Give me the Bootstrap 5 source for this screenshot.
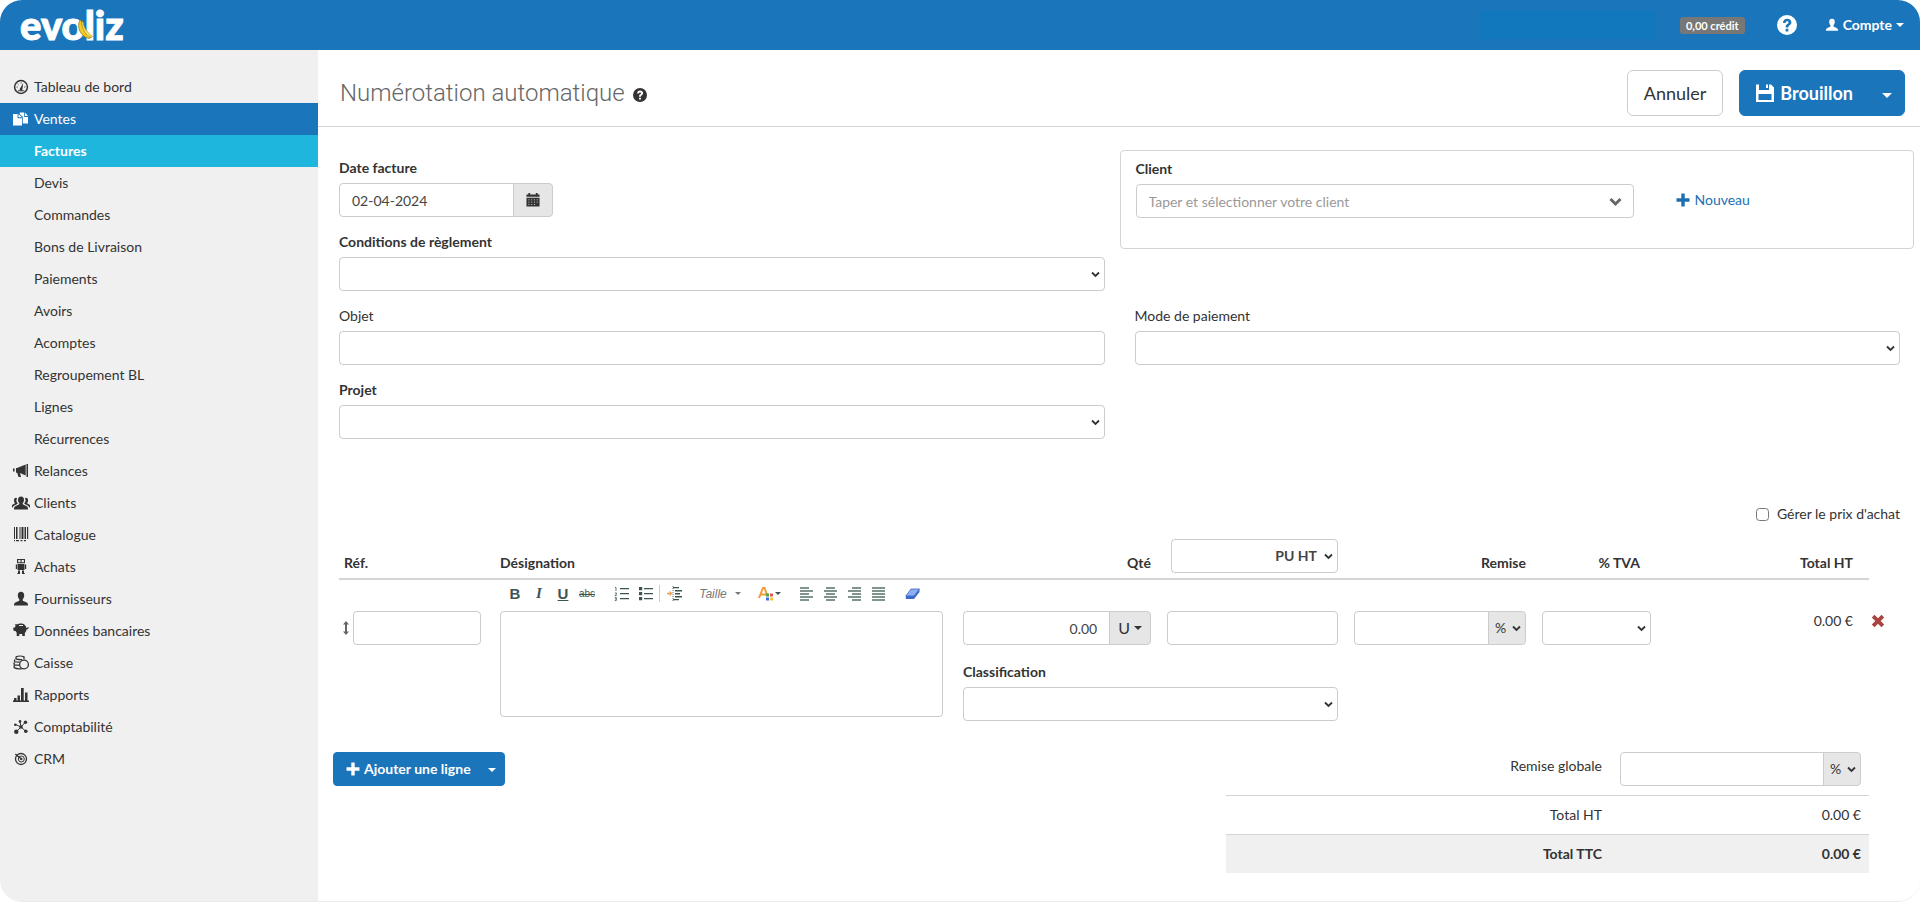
<!DOCTYPE html>
<html lang="fr">
<head>
<meta charset="utf-8">
<meta name="viewport" content="width=device-width, initial-scale=1">
<title>Evoliz - Facture</title>
<link href="https://cdn.jsdelivr.net/npm/bootstrap@5.3.0/dist/css/bootstrap.min.css" rel="stylesheet">
<style>
  :root { --brand: #1b75bb; --line: #d4d4d4; }
  body { font-family: Lato, "Liberation Sans", sans-serif; font-size: 14px; line-height: 20px; color: #333; background: #fff; }
  .app { min-height: 100vh; border-radius: 22px; overflow: hidden; border-bottom: 1px solid #ebebeb; }
  .ico { width: 14px; height: 14px; fill: currentColor; flex: none; }
  .ico-lg { width: 20px; height: 20px; }
  .ico-md { width: 18px; height: 18px; }

  .topbar { height: 50px; background: var(--brand); color: #fff; padding: 0 16px 0 20px; }
  .logo { font-size: 40px; font-weight: 900; line-height: 50px; color: #fff; text-decoration: none; position: relative; -webkit-text-stroke: 1px #fff; }
  .logo svg { position: absolute; left: 56px; top: 20px; width: 18px; height: 20px; }
  .account-name { width: 176px; height: 28px; background: #1278bd; }
  .credit { background: #777; font-size: 11px; font-weight: 700; line-height: 17px; padding: 0 6px; border-radius: 3px; }
  .topbar a { color: #fff; text-decoration: none; }
  .caret { display: inline-block; border: 4px solid transparent; border-top-color: currentColor; border-bottom: 0; vertical-align: middle; }

  .side { width: 318px; background: #f0f0f0; padding-top: 21px; }
  .side a { display: flex; align-items: center; gap: 6px; height: 32px; padding-left: 14px; color: #333; text-decoration: none; }
  .side .ico { width: 18px; height: 16px; margin: 0 -2px; overflow: visible; }
  .side .sub { padding-left: 34px; }
  .side .open { background: var(--brand); color: #fff; }
  .side .current { background: #1fb6dd; color: #fff; font-weight: 700; }

  .titlebar { padding: 20px 15px 10px 22px; border-bottom: 1px solid var(--line); }
  .titlebar h1 { font: 300 24px/46px Roboto, sans-serif; color: #666; margin: 0; }
  .btn { --bs-btn-font-size: 14px; --bs-btn-line-height: 20px; --bs-btn-border-radius: 4px; }
  .btn-brand { --bs-btn-bg: var(--brand); --bs-btn-border-color: var(--brand); --bs-btn-color: #fff; --bs-btn-hover-bg: #16629d; --bs-btn-hover-color: #fff; font-weight: 700; }
  .big { --bs-btn-font-size: 18px; --bs-btn-line-height: 24px; --bs-btn-padding-y: 10px; --bs-btn-padding-x: 16px; --bs-btn-border-radius: 6px; }
  .big .caret { border-width: 5px; border-bottom: 0; }
  .big.toggle { --bs-btn-padding-x: 12px; }
  .save { gap: 6px; }
  .btn-plain { --bs-btn-border-color: #ccc; --bs-btn-bg: #fff; --bs-btn-color: #333; }

  .work { padding: 23px 20px 28px 21px; }
  .cols { --bs-gutter-x: 30px; }
  .field { margin-bottom: 15px; }
  .field label { display: block; margin-bottom: 5px; }
  .client-box { border: 1px solid var(--line); border-radius: 4px; margin: 0 -14px 57px -15px; padding: 8px 14px 30px 15px; }
  .form-control, .form-select { height: 34px; border: 1px solid #ccc; border-radius: 4px; font-size: 14px; line-height: 20px; padding: 6px 12px; color: #444; background-color: #fff; }
  .form-control::placeholder { color: #999; }
  textarea.form-control { height: 106px; resize: none; }
  .form-select { padding-right: 20px; background-position: right 4px center; background-size: 9px 9px;
    background-image: url("data:image/svg+xml,%3Csvg xmlns='http://www.w3.org/2000/svg' viewBox='0 0 9 9'%3E%3Cpath d='M1 2.5 4.5 6 8 2.5' fill='none' stroke='%23333' stroke-width='1.8'/%3E%3C/svg%3E"); }
  .client-input { background: no-repeat right 11px center / 13px 13px
    url("data:image/svg+xml,%3Csvg xmlns='http://www.w3.org/2000/svg' viewBox='0 0 13 13'%3E%3Cpath d='M1.5 4 6.5 9 11.5 4' fill='none' stroke='%23666' stroke-width='3'/%3E%3C/svg%3E"); }
  .date-group { width: 214px; }
  .addon { background-color: #e6e6e6; border: 1px solid #ccc; color: #333; padding: 0; justify-content: center; border-radius: 4px; }
  select.addon.form-select { flex: 0 0 38px; width: 38px; padding: 6px 0 6px 6px; }
  .link-brand { color: #1b6fb3; text-decoration: none; margin-left: 12px; }
  .option-row { padding-top: 50px; }

  .lines { table-layout: fixed; width: 100%; margin-top: 15px; }
  .lines th, .lines td { padding: 0 8px; vertical-align: top; }
  .lines thead th { vertical-align: bottom; padding-bottom: 5px; border-bottom: 2px solid var(--line); }
  .lines thead th:first-child { padding-left: 5px; }
  .lines thead th:last-child { border-bottom: 0; }
  .lines thead th.tva { padding-right: 19px; }
  .c-ref { width: 153px; } .c-qty { width: 204px; } .c-pu { width: 187px; } .c-rem { width: 188px; }
  .c-tva { width: 125px; } .c-tot { width: 210px; } .c-del { width: 31px; }
  .lines .entry > td { padding-top: 31px; height: 83px; }
  .lines .entry > td.desc { padding: 0 12px 0 8px; }
  .lines .entry > td.ref { padding: 31px 11px 0 3px; }
  .lines .entry > td.del { padding-left: 2px; }
  .grip { width: 8px; height: 16px; color: #666; }
  .ref .form-control { margin-left: 3px; }
  .editbar { height: 31px; padding: 0 0 4px 3px; color: #3d5552; }
  .editbar button { width: 24px; height: 22px; padding: 0; border: 0; background: none; color: inherit; display: flex; align-items: center; justify-content: center; gap: 4px; }
  .editbar .ico { width: 15px; height: 15px; }
  .editbar .caret { border-width: 3px; border-bottom: 0; }
  .editbar .wide { width: 48px; gap: 8px; font: italic 12px "Liberation Sans", sans-serif; color: #777; }
  .editbar .tint { width: 30px; gap: 2px; }
  .editbar .lead-gap { margin-left: 10px; }
  .editbar .soft { color: #80948f; }
  .editbar .sep { width: 1px; height: 17px; background: #ccc; margin: 0 2px; }
  .editbar .face { font: bold 15px "Liberation Sans", sans-serif; }
  .editbar .serif { font-family: "Liberation Serif", serif; font-style: italic; }
  .editbar .slim { font: 10px "Liberation Sans", sans-serif; }

  .add-line { margin-left: -6px; }
  .totals { width: 643px; margin-right: 31px; }
  .totals th, .totals td { padding: 9px 8px; text-align: right; border-top: 1px solid var(--line); font-weight: 400; }
  .totals td { width: 259px; }
  .totals tr:first-child > * { border-top: 0; padding: 0 8px 9px 10px; vertical-align: top; }
  .totals tr:first-child th { padding-top: 4px; }
  .totals .grand > * { background: #f0f0f0; font-weight: 700; }
  .form-check-input { width: 13px; height: 13px; margin: 0; border-color: #777; border-radius: 3px; }
</style>
</head>
<body>
<svg width="0" height="0" class="d-none">
  <symbol id="i-dash" viewBox="0 0 16 16"><circle cx="8" cy="8" r="6.4" fill="none" stroke="currentColor" stroke-width="1.5"/><path d="M7 9.500 10.200 4 9.400 10.200a1.400 1.400 0 1 1-2.400-.7z"/><path d="M3.600 8h1.200M4.600 4.800l.9.900M8 3.300v1.200M11.200 8h1.200M4.800 11.800h6.400" fill="none" stroke="currentColor" stroke-width=".9"/></symbol>
  <symbol id="i-docs" viewBox="0 0 16 16"><path d="M0 3h4.600v4.200H9V14.500H0zM5.500 3 9 6.300H5.500z"/><path d="M6.800 1.500h4.400v4.400H15v6.600h-5.200V5.800L6.800 3z"/><path d="M12 1.500 15 5h-3z"/></symbol>
  <symbol id="i-horn" viewBox="0 0 16 16"><path d="M13.500 1H15v13h-1.500zM4 5l8.700-3.500v11L7 10l1 4H5.500L4.200 9.800H3V5zM0 5.500h1.600v3H0z"/></symbol>
  <symbol id="i-group" viewBox="1 1 18 14"><path d="M10 1.500c2 0 3 1.400 3 3.200 0 1.400-.5 2.600-1.300 3.300v1.300l4 2c1 .5 1.300 1.200 1.300 3.200H3c0-2 .3-2.700 1.300-3.200l4-2V8C7.500 7.300 7 6.100 7 4.700c0-1.800 1-3.200 3-3.200z"/><path d="M6 3.500a4 4 0 0 0 .7 4.700v.6L3 10.800c-.7.400-1 .9-1.300 1.700H0c0-1.700.3-2 1-2.400l2.700-1.500v-.9C2.400 6.300 2.700 2.700 5 2.700c.5 0 .8.300 1 .8zM14 3.500a4 4 0 0 1-.7 4.700v.6l3.700 2c.7.400 1 .9 1.300 1.700H20c0-1.700-.3-2-1-2.400l-2.700-1.500v-.9c1.300-1.400 1-5-1.300-5-.5 0-.8.300-1 .8z"/></symbol>
  <symbol id="i-code" viewBox="0 0 16 16"><path d="M1 0h1v12H1zM3 0h1.500v12H3zM6.500 0h1v12h-1zM8.500 0h2v12h-2zM11.500 0H13v12h-1.500zM14 0h1.200v12H14zM1 13h1v1.200H1zM3 13h3v1.200H3zM7.500 13h2v1.200h-2zM11 13h2v1.200h-2z"/></symbol>
  <symbol id="i-robot" viewBox="0 0 16 16"><path fill-rule="evenodd" d="M4 0h8v4.300H4zM5.200 1v2.200h2.300V1zM8.600 1v2.200h2.300V1z"/><path d="M4.500 5h7v6h-7zM2.800 5.500H4V10H2.800zM12 5.500h1.200V10H12zM5 11.500h2V15H4.300v-1H5zM9 11.500h2V14h.7v1H9z"/></symbol>
  <symbol id="i-user" viewBox="0 0 16 16"><path d="M8 .8c2 0 3.200 1.400 3.200 3.400 0 1.700-.6 3.200-1.500 4.100v1.500l4 1.800c1 .5 1.300 1.400 1.300 3H1c0-1.600.3-2.500 1.300-3l4-1.800V8.300c-.9-.9-1.500-2.400-1.500-4.100C4.800 2.200 6 .8 8 .8z"/></symbol>
  <symbol id="i-pig" viewBox="0 0 16 16"><path fill-rule="evenodd" d="M4.500 1.200C6 .2 10 .2 11.400 1.500l.9 1.300c.7.600 1 1.300 1.100 2.100.8.400 1.200 0 1.400-.9l.9.200c0 1.400-1 2.200-2.100 2-.2 1.600-.8 2.800-1.800 3.700V13h-2.600v-2H6.300v2H3.700V9.800L2.500 8H.8L0 4.800h1.500L2.600 3 2 1.200zM6 2v.9h4V2z"/></symbol>
  <symbol id="i-coins" viewBox="0 0 16 16"><g fill="none" stroke="currentColor" stroke-width="1.300"><circle cx="11" cy="9.500" r="4.400"/><path d="M3 1.800c2-1 6-1 8 0v2.400M3 1.800v2c2 .8 4 .9 6 .8M2 4.500c-.8 1.200-.8 2 .2 2.400l4.600.3M1.500 7.500C.6 8.700.8 9.500 1.800 9.900l4.600.3M1.200 10.200v2.400c2 1.300 5 1.500 8 1"/></g></symbol>
  <symbol id="i-chart" viewBox="0 0 16 16"><path d="M0 13.500h16V15H0zM1 11h2.500v2.500H1zM4.500 8.500H7v5H4.500zM8 1h2.700v12.500H8zM12 5.500h2.500v8H12z"/></symbol>
  <symbol id="i-net" viewBox="0 0 16 16"><path d="M3.500 12.500 8 8l5 4.500M8 8 2.500 5.500M8 8l4-4.500M8 8 7 3" fill="none" stroke="currentColor" stroke-width="1"/><circle cx="3.300" cy="12.700" r="2.200"/><circle cx="12.800" cy="12.300" r="1.800"/><circle cx="2.300" cy="5.700" r="1.300"/><circle cx="12.500" cy="3.300" r="1.700"/><circle cx="7" cy="2.400" r="1.300"/><circle cx="8" cy="8" r="1.800"/></symbol>
  <symbol id="i-target" viewBox="0 0 16 16"><g fill="none" stroke="currentColor"><circle cx="8" cy="8" r="5.500" stroke-width="1.300"/><circle cx="8.300" cy="8" r="3" stroke-width="1"/><path d="M2.300 3 8.300 8" stroke-width="1.300"/></g><circle cx="8.300" cy="8" r="1.200"/></symbol>
  <symbol id="i-help" viewBox="0 0 16 16"><path fill-rule="evenodd" d="M8 0a8 8 0 1 1 0 16A8 8 0 0 1 8 0zM6.900 11v2.100h2.200V11zM4.800 6.400h2.100c0-1 .4-1.400 1.200-1.400.7 0 1.100.4 1.100.9 0 .6-.4.900-1 1.300C7.200 7.900 6.900 8.500 6.900 9.900h2.200c0-.8.200-1.100 1-1.700.9-.6 1.400-1.300 1.400-2.400 0-1.700-1.400-2.900-3.400-2.900-2.100 0-3.300 1.300-3.300 3.500z"/></symbol>
  <symbol id="i-save" viewBox="0 0 18 18"><path fill-rule="evenodd" d="M0 .5h3V6h10V.5h2L18 3.500V18H0zM2.500 10v6h13v-6z"/><path d="M10 .5h2V4h-2z"/></symbol>
  <symbol id="i-cal" viewBox="0 0 14 15"><path d="M0 1.500h2V0h2v1.500h6V0h2v1.500h2V4H0z"/><path fill-rule="evenodd" d="M0 5h14v9.500H0zM2 7v.8h1.200V7zM5 7v.8h1.200V7zM8 7v.8h1.200V7zM11 7v.8h1.200V7zM2 9.500v.8h1.200v-.8zM5 9.500v.8h1.200v-.8zM8 9.500v.8h1.200v-.8zM11 9.500v.8h1.200v-.8zM2 12v.8h1.200V12zM5 12v.8h1.200V12zM8 12v.8h1.200V12z"/></symbol>
  <symbol id="i-plus" viewBox="0 0 14 14"><path d="M5.300.5h3.400v4.800h4.800v3.400H8.700v4.800H5.300V8.700H.5V5.300h4.800z"/></symbol>
  <symbol id="i-cross" viewBox="0 0 14 14"><path d="M3.500.8 7 4.300 10.500.8l2.700 2.700L9.700 7l3.500 3.500-2.700 2.700L7 9.700l-3.500 3.500L.8 10.500 4.300 7 .8 3.500z"/></symbol>
  <symbol id="i-move" viewBox="0 0 8 16"><path d="M4 1 7 4.500H5v7h2L4 15 1 11.500h2v-7H1z"/></symbol>
  <symbol id="i-ol" viewBox="0 0 15 15"><path d="M6 2h9v1.200H6zM6 7h9v1.200H6zM6 12h9v1.200H6z"/><path d="M1 1.500h1V5M.8 7h1.700v1L1 9.500h1.700M.8 11.500h1.500v3H.8M1 13h1.300" fill="none" stroke="currentColor" stroke-width=".8"/></symbol>
  <symbol id="i-ul" viewBox="0 0 15 15"><path d="M6 2h9v1.200H6zM6 7h9v1.200H6zM6 12h9v1.200H6zM1 1h3.200v3.200H1zM1 6h3.200v3.200H1zM1 11h3.200v3.200H1z"/></symbol>
  <symbol id="i-indent" viewBox="0 0 15 15"><path d="M6 1h6v1.200H6zM8 4h7v1.600H8zM8 7h5v1.600H8zM8 10h7v1.600H8zM6 13h6v1.200H6z"/><path d="M6 0v15" stroke="currentColor" stroke-dasharray="1 1" stroke-width=".8"/><path d="M0 6.800h2.500V4.800l3 2.700-3 2.700V8.200H0z" fill="#f0a050"/></symbol>
  <symbol id="i-al" viewBox="0 0 15 15"><path d="M1 1h9v2H1zM1 4h13v2H1zM1 7h9v2H1zM1 10h13v2H1zM1 13h9v2H1z"/></symbol>
  <symbol id="i-ac" viewBox="0 0 15 15"><path d="M3 1h9v2H3zM1 4h13v2H1zM3 7h9v2H3zM1 10h13v2H1zM3 13h9v2H3z"/></symbol>
  <symbol id="i-ar" viewBox="0 0 15 15"><path d="M5 1h9v2H5zM1 4h13v2H1zM5 7h9v2H5zM1 10h13v2H1zM5 13h9v2H5z"/></symbol>
  <symbol id="i-aj" viewBox="0 0 15 15"><path d="M1 1h13v2H1zM1 4h13v2H1zM1 7h13v2H1zM1 10h13v2H1zM1 13h13v2H1z"/></symbol>
</svg>

<div class="app d-flex flex-column">
  <header class="topbar d-flex align-items-center">
    <a class="logo" href="#">evoliz
      <svg viewBox="0 0 18 20"><path d="M4 0c-4 7 1 17 9 18.500l2-1C10 13 6 8 5.500 1z" fill="#f7c927" stroke="#8c6d1f" stroke-width=".7"/><path d="M6 1c-1 7 4 15 9 16.500l1.500-1C12 13 7.500 8 7.500 2.500z" fill="#fde05a" stroke="#8c6d1f" stroke-width=".5"/></svg>
    </a>
    <div class="account-name ms-auto"></div>
    <span class="credit ms-4">0,00 crédit</span>
    <a href="#" class="d-flex ms-4 px-2" aria-label="Aide"><svg class="ico ico-lg"><use href="#i-help"/></svg></a>
    <a href="#" class="d-flex align-items-center ms-3 fw-bold"><svg class="ico mx-1"><use href="#i-user"/></svg>Compte<span class="caret ms-1"></span></a>
  </header>

  <div class="d-flex flex-grow-1">
    <nav class="side flex-shrink-0">
      <a href="#"><svg class="ico"><use href="#i-dash"/></svg>Tableau de bord</a>
      <a href="#" class="open"><svg class="ico"><use href="#i-docs"/></svg>Ventes</a>
      <a href="#" class="sub current">Factures</a>
      <a href="#" class="sub">Devis</a>
      <a href="#" class="sub">Commandes</a>
      <a href="#" class="sub">Bons de Livraison</a>
      <a href="#" class="sub">Paiements</a>
      <a href="#" class="sub">Avoirs</a>
      <a href="#" class="sub">Acomptes</a>
      <a href="#" class="sub">Regroupement BL</a>
      <a href="#" class="sub">Lignes</a>
      <a href="#" class="sub">Récurrences</a>
      <a href="#"><svg class="ico"><use href="#i-horn"/></svg>Relances</a>
      <a href="#"><svg class="ico"><use href="#i-group"/></svg>Clients</a>
      <a href="#"><svg class="ico"><use href="#i-code"/></svg>Catalogue</a>
      <a href="#"><svg class="ico"><use href="#i-robot"/></svg>Achats</a>
      <a href="#"><svg class="ico"><use href="#i-user"/></svg>Fournisseurs</a>
      <a href="#"><svg class="ico"><use href="#i-pig"/></svg>Données bancaires</a>
      <a href="#"><svg class="ico"><use href="#i-coins"/></svg>Caisse</a>
      <a href="#"><svg class="ico"><use href="#i-chart"/></svg>Rapports</a>
      <a href="#"><svg class="ico"><use href="#i-net"/></svg>Comptabilité</a>
      <a href="#"><svg class="ico"><use href="#i-target"/></svg>CRM</a>
    </nav>

    <main class="flex-grow-1">
      <div class="titlebar d-flex align-items-center">
        <h1>Numérotation automatique</h1>
        <svg class="ico ms-2 mt-1"><use href="#i-help"/></svg>
        <button type="button" class="btn btn-plain big ms-auto me-3">Annuler</button>
        <div class="btn-group">
          <button type="button" class="btn btn-brand big save d-flex align-items-center"><svg class="ico ico-md"><use href="#i-save"/></svg>Brouillon</button>
          <button type="button" class="btn btn-brand big toggle" aria-label="Plus d'options"><span class="caret"></span></button>
        </div>
      </div>

      <form class="work">
        <div class="row cols">
          <div class="col-6 pt-2">
            <div class="field">
              <label for="date" class="fw-bold">Date facture</label>
              <div class="input-group date-group">
                <input id="date" class="form-control" value="02-04-2024">
                <button type="button" class="input-group-text addon px-2" aria-label="Calendrier"><svg class="ico mx-1"><use href="#i-cal"/></svg></button>
              </div>
            </div>
            <div class="field">
              <label for="cond" class="fw-bold">Conditions de règlement</label>
              <select id="cond" class="form-select"><option></option></select>
            </div>
            <div class="field">
              <label for="objet">Objet</label>
              <input id="objet" class="form-control">
            </div>
            <div class="field">
              <label for="projet" class="fw-bold">Projet</label>
              <select id="projet" class="form-select"><option></option></select>
            </div>
          </div>
          <div class="col-6">
            <div class="client-box">
              <div class="row cols align-items-end">
                <div class="field col-8 mb-0">
                  <label for="client" class="fw-bold">Client</label>
                  <input id="client" class="form-control client-input" placeholder="Taper et sélectionner votre client">
                </div>
                <div class="col-4 pb-1"><a href="#" class="link-brand d-inline-flex align-items-center gap-1 mb-1"><svg class="ico"><use href="#i-plus"/></svg>Nouveau</a></div>
              </div>
            </div>
            <div class="field">
              <label for="mode">Mode de paiement</label>
              <select id="mode" class="form-select"><option></option></select>
            </div>
          </div>
        </div>

        <div class="option-row d-flex justify-content-end align-items-center gap-2">
          <input type="checkbox" class="form-check-input" id="achat"><label for="achat">Gérer le prix d'achat</label>
        </div>

        <table class="lines">
          <colgroup><col class="c-ref"><col><col class="c-qty"><col class="c-pu"><col class="c-rem"><col class="c-tva"><col class="c-tot"><col class="c-del"></colgroup>
          <thead>
            <tr>
              <th>Réf.</th><th>Désignation</th><th class="text-end">Qté</th>
              <th class="ps-1"><div class="ps-2"><select class="form-select fw-bold text-end" aria-label="Prix unitaire"><option>PU HT</option></select></div></th>
              <th class="text-end">Remise</th><th class="text-end tva">% TVA</th><th class="text-end pe-3">Total HT</th><th></th>
            </tr>
          </thead>
          <tbody>
            <tr class="entry">
              <td rowspan="2" class="ref"><div class="d-flex align-items-center"><svg class="ico grip"><use href="#i-move"/></svg><input class="form-control" aria-label="Référence"></div></td>
              <td rowspan="2" class="desc">
                <div class="editbar d-flex align-items-center">
                  <button type="button" class="face">B</button>
                  <button type="button" class="face serif">I</button>
                  <button type="button" class="face text-decoration-underline">U</button>
                  <button type="button" class="slim text-decoration-line-through">abc</button>
                  <button type="button" class="lead-gap" aria-label="Liste numérotée"><svg class="ico"><use href="#i-ol"/></svg></button>
                  <button type="button" aria-label="Liste à puces"><svg class="ico"><use href="#i-ul"/></svg></button>
                  <span class="sep"></span>
                  <button type="button" aria-label="Retrait"><svg class="ico"><use href="#i-indent"/></svg></button>
                  <button type="button" class="wide lead-gap">Taille<span class="caret"></span></button>
                  <button type="button" class="tint lead-gap" aria-label="Couleur"><svg class="ico" viewBox="0 0 15 15"><path d="M1 12 5 2h1.500l3 8M2.500 8.500h6" fill="none" stroke="#f39a3c" stroke-width="2"/><path d="M8 7.500h3v3H8z" fill="#47a447"/><path d="M12 7.500h3v3h-3z" fill="#e0584f"/><path d="M8 11.500h3v3H8z" fill="#3c6fd8"/><path d="M12 11.500h3v3h-3z" fill="#f3c53c"/></svg><span class="caret"></span></button>
                  <button type="button" class="lead-gap soft" aria-label="Aligner à gauche"><svg class="ico"><use href="#i-al"/></svg></button>
                  <button type="button" class="soft" aria-label="Centrer"><svg class="ico"><use href="#i-ac"/></svg></button>
                  <button type="button" class="soft" aria-label="Aligner à droite"><svg class="ico"><use href="#i-ar"/></svg></button>
                  <button type="button" class="soft" aria-label="Justifier"><svg class="ico"><use href="#i-aj"/></svg></button>
                  <button type="button" class="lead-gap" aria-label="Effacer la mise en forme"><svg class="ico" viewBox="0 0 15 15"><path d="M6 3h8.500L9 10H.8z" fill="#8fb0f0" stroke="#3a5fc0" stroke-width=".8"/><path d="M.8 10H9v3H.8zM9 10l5.500-7v3L9 13z" fill="#3f68cf"/></svg></button>
                </div>
                <textarea class="form-control" aria-label="Désignation"></textarea>
              </td>
              <td><div class="input-group flex-nowrap"><input class="form-control text-end" value="0.00" aria-label="Quantité"><button type="button" class="input-group-text addon px-2">U<span class="caret ms-1"></span></button></div></td>
              <td><input class="form-control" aria-label="Prix unitaire HT"></td>
              <td><div class="input-group flex-nowrap"><input class="form-control" aria-label="Remise"><select class="form-select addon" aria-label="Unité de remise"><option>%</option></select></div></td>
              <td><select class="form-select" aria-label="Taux de TVA"><option></option></select></td>
              <td class="text-end pe-3">0.00 €</td>
              <td class="del"><a href="#" aria-label="Supprimer la ligne" class="text-danger-emphasis"><svg class="ico" fill="#a94442" color="#a94442"><use href="#i-cross" style="fill:#a94442"/></svg></a></td>
            </tr>
            <tr>
              <td colspan="2"><div class="field"><label for="classif" class="fw-bold">Classification</label><select id="classif" class="form-select"><option></option></select></div></td>
              <td></td><td></td><td></td><td></td>
            </tr>
          </tbody>
        </table>

        <div class="d-flex justify-content-between align-items-start pt-3">
          <div class="btn-group add-line">
            <button type="button" class="btn btn-brand d-flex align-items-center gap-1 pe-2"><svg class="ico"><use href="#i-plus"/></svg>Ajouter une ligne</button>
            <button type="button" class="btn btn-brand px-2" aria-label="Plus d'options"><span class="caret"></span></button>
          </div>
          <table class="totals">
            <tr><th><label for="globale">Remise globale</label></th><td><div class="input-group flex-nowrap"><input id="globale" class="form-control"><select class="form-select addon" aria-label="Unité de remise globale"><option>%</option></select></div></td></tr>
            <tr><th>Total HT</th><td>0.00 €</td></tr>
            <tr class="grand"><th>Total TTC</th><td>0.00 €</td></tr>
          </table>
        </div>
      </form>
    </main>
  </div>
</div>
<script src="https://cdn.jsdelivr.net/npm/bootstrap@5.3.0/dist/js/bootstrap.bundle.min.js"></script>
</body>
</html>
